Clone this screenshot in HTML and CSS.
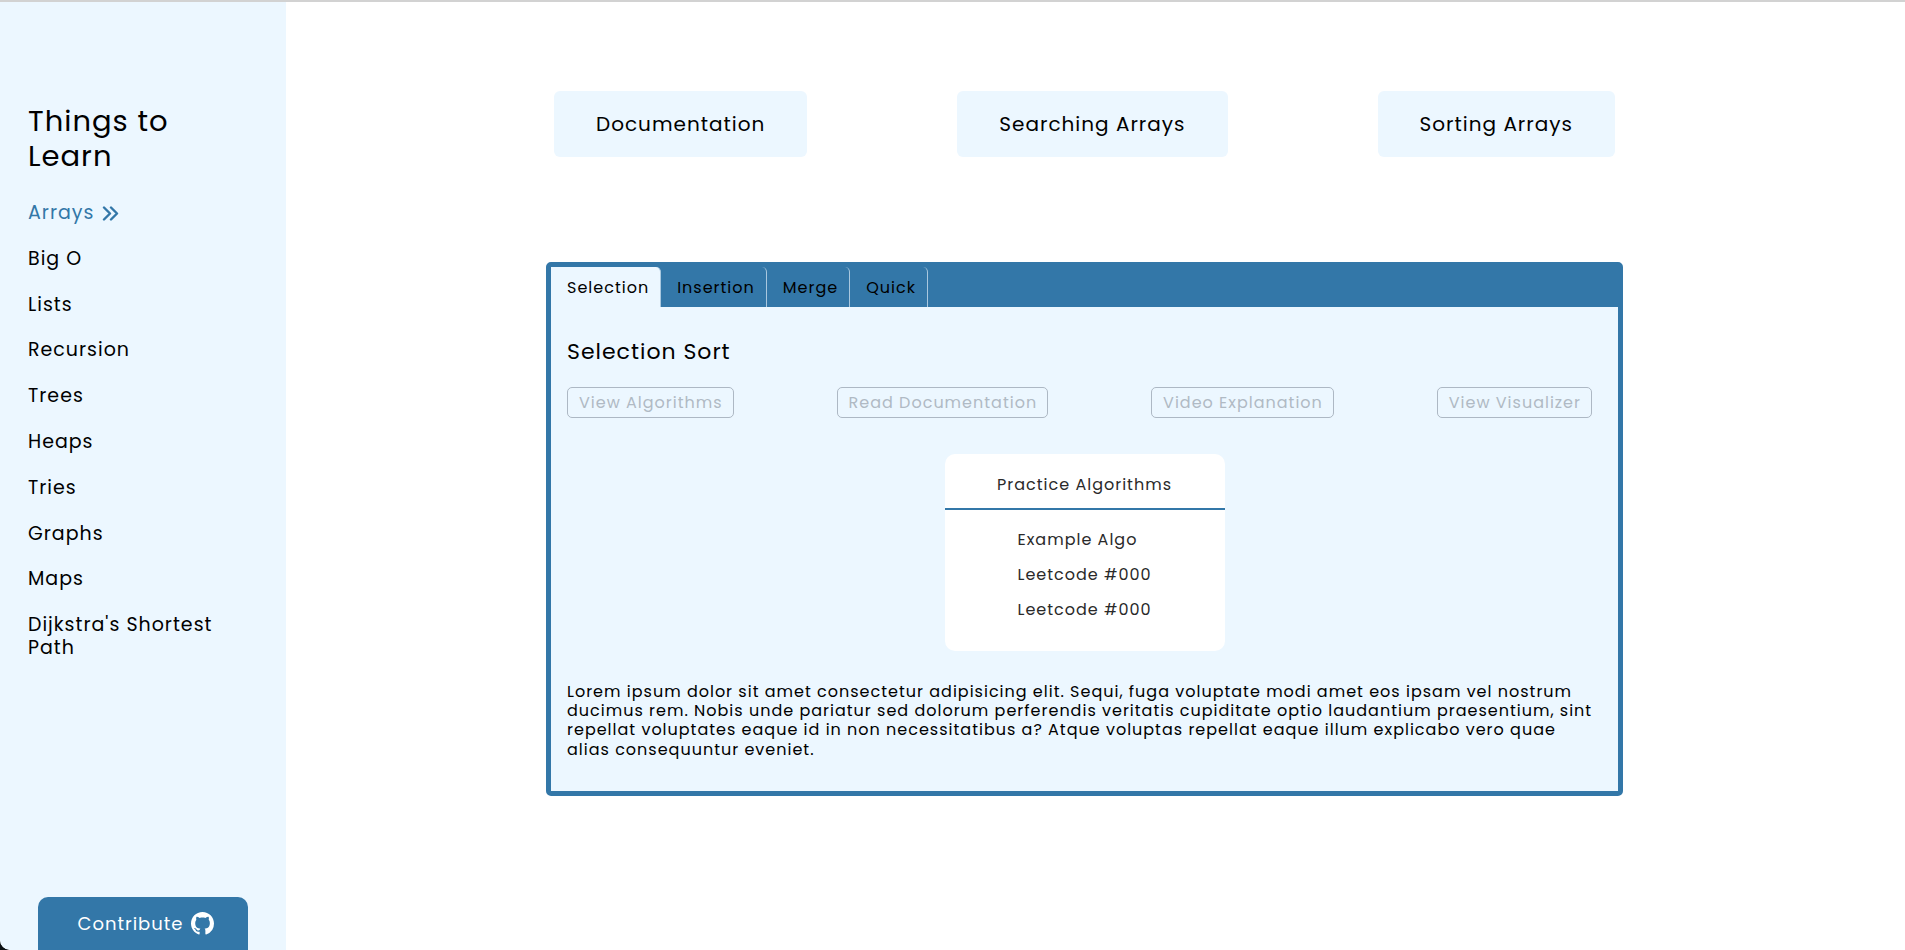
FILE: index.html
```html
<!DOCTYPE html>
<html lang="en">
<head>
<meta charset="utf-8">
<title>Things to Learn</title>
<link rel="stylesheet" href="styles.css">
</head>
<body>
<div class="layout">
  <aside class="sidebar">
    <h1 class="sidebar-title">Things to Learn</h1>
    <nav>
      <ul class="topics">
        <li><a class="topic active" href="#arrays">Arrays
          <svg class="chevrons" viewBox="0 0 17 15" aria-hidden="true"><path d="M2 1.500l6 6-6 6M9 1.500l6 6-6 6"/></svg></a></li>
        <li><a class="topic" href="#big-o">Big O</a></li>
        <li><a class="topic" href="#lists">Lists</a></li>
        <li><a class="topic" href="#recursion">Recursion</a></li>
        <li><a class="topic" href="#trees">Trees</a></li>
        <li><a class="topic" href="#heaps">Heaps</a></li>
        <li><a class="topic" href="#tries">Tries</a></li>
        <li><a class="topic" href="#graphs">Graphs</a></li>
        <li><a class="topic" href="#maps">Maps</a></li>
        <li><a class="topic" href="#dijkstra">Dijkstra's Shortest Path</a></li>
      </ul>
    </nav>
    <a class="contribute" href="#contribute">Contribute
      <svg class="github" viewBox="0 0 16 16" aria-hidden="true"><path d="M8 0C3.580 0 0 3.580 0 8c0 3.540 2.290 6.530 5.470 7.590.4.07.55-.17.55-.38 0-.19-.01-.82-.01-1.490-2.010.37-2.530-.49-2.690-.94-.09-.23-.48-.94-.82-1.130-.28-.15-.68-.52-.01-.53.63-.01 1.080.58 1.230.82.72 1.210 1.870.87 2.330.66.07-.52.28-.87.51-1.070-1.780-.2-3.640-.89-3.640-3.950 0-.87.31-1.590.82-2.150-.08-.2-.36-1.020.08-2.120 0 0 .67-.21 2.200.82.64-.18 1.320-.27 2-.27s1.360.09 2 .27c1.530-1.040 2.200-.82 2.200-.82.44 1.100.16 1.920.08 2.120.51.56.82 1.270.82 2.150 0 3.070-1.870 3.750-3.650 3.950.29.25.54.73.54 1.480 0 1.070-.01 1.930-.01 2.200 0 .21.15.46.55.38A8.010 8.010 0 0 0 16 8c0-4.420-3.580-8-8-8z"/></svg></a>
  </aside>
  <main class="content">
    <nav class="sections">
      <a class="section-link" href="#documentation">Documentation</a>
      <a class="section-link" href="#searching">Searching Arrays</a>
      <a class="section-link" href="#sorting">Sorting Arrays</a>
    </nav>
    <section class="panel">
      <div class="tabs" role="tablist">
        <button class="tab selected" role="tab" aria-selected="true">Selection</button>
        <button class="tab" role="tab" aria-selected="false">Insertion</button>
        <button class="tab" role="tab" aria-selected="false">Merge</button>
        <button class="tab" role="tab" aria-selected="false">Quick</button>
      </div>
      <div class="panel-body" role="tabpanel">
        <h2 class="panel-title">Selection Sort</h2>
        <div class="actions">
          <button class="action" disabled>View Algorithms</button>
          <button class="action" disabled>Read Documentation</button>
          <button class="action" disabled>Video Explanation</button>
          <button class="action" disabled>View Visualizer</button>
        </div>
        <div class="practice">
          <h3 class="practice-title">Practice Algorithms</h3>
          <ul class="practice-list">
            <li>Example Algo</li>
            <li>Leetcode #000</li>
            <li>Leetcode #000</li>
          </ul>
        </div>
        <p class="description">Lorem ipsum dolor sit amet consectetur adipisicing elit. Sequi, fuga voluptate modi amet eos ipsam vel nostrum ducimus rem. Nobis unde pariatur sed dolorum perferendis veritatis cupiditate optio laudantium praesentium, sint repellat voluptates eaque id in non necessitatibus a? Atque voluptas repellat eaque illum explicabo vero quae alias consequuntur eveniet.</p>
      </div>
    </section>
  </main>
</div>
</body>
</html>
```

FILE: styles.css
```css
:root {
  --blue: #3377a8;
  --pale: #ecf7ff;
}

* {
  box-sizing: border-box;
  margin: 0;
  padding: 0;
}

html {
  background: #0b1013;
}

body {
  background: #fff;
  border-bottom-left-radius: 10px;
  color: #000;
  font-family: Poppins, Inter, sans-serif;
  font-size: 16px;
  letter-spacing: 1px;
  line-height: 1.2;
  overflow: hidden;
}

button {
  font: inherit;
  letter-spacing: inherit;
  color: inherit;
  background: none;
  border: 0;
}

a {
  color: inherit;
  text-decoration: none;
}

ul {
  list-style: none;
}

h1, h2, h3 {
  font-weight: 400;
}

.layout {
  display: flex;
  min-height: 100vh;
  border-top: 2px solid #d2d2d2;
}

.sidebar {
  flex: 0 0 286px;
  display: flex;
  flex-direction: column;
  padding: 102px 38px 0 28px;
  background: var(--pale);
  border-bottom-left-radius: 10px;
}

.sidebar-title {
  max-width: 180px;
  margin-bottom: 28px;
  font-size: 29px;
  line-height: 35px;
}

.topics {
  display: grid;
  gap: 23px;
  font-size: 19px;
}

.topic {
  display: flex;
  align-items: center;
  gap: 8px;
}

.active {
  color: var(--blue);
}

.chevrons {
  width: 17px;
  height: 15px;
  fill: none;
  stroke: currentColor;
  stroke-width: 2.4;
  stroke-linecap: round;
  stroke-linejoin: round;
}

.contribute {
  display: flex;
  align-items: center;
  justify-content: center;
  gap: 7px;
  height: 53px;
  margin: auto 0 0 10px;
  padding-left: 5px;
  border-radius: 10px 10px 0 0;
  background: var(--blue);
  color: #fff;
  font-size: 18px;
}

.github {
  width: 23px;
  height: 23px;
  fill: currentColor;
}

.content {
  flex: 1;
  padding: 89px 282px 0 260px;
}

.sections {
  display: flex;
  justify-content: space-between;
  margin: 0 8px 105px;
}

.section-link {
  padding: 21px 42px;
  border-radius: 6px;
  background: var(--pale);
  font-size: 20px;
  line-height: 24px;
}

.panel {
  border: 5px solid var(--blue);
  border-radius: 5px;
  background: var(--pale);
}

.tabs {
  display: flex;
  height: 40px;
  background: var(--blue);
}

.tab {
  padding: 2px 11px 0 16px;
  border-right: 1px solid #a9c8df;
  border-top-right-radius: 5px;
}

.selected {
  background: var(--pale);
}

.panel-body {
  padding: 30px 16px 32px;
}

.panel-title {
  margin-bottom: 20px;
  font-size: 22px;
  line-height: 30px;
}

.actions {
  display: flex;
  justify-content: space-between;
  margin: 0 10px 36px 0;
}

.action {
  height: 31px;
  padding: 0 10px 0 11px;
  border: 1px solid #adb8c4;
  border-radius: 5px;
  color: #b0bac4;
}

.practice {
  width: 280px;
  margin: 0 auto 31px;
  border-radius: 10px;
  background: #fff;
  color: #2a2a2a;
  line-height: 19px;
}

.practice-title {
  padding: 21px 0 14px;
  border-bottom: 2px solid var(--blue);
  font-size: 16px;
  text-align: center;
}

.practice-list {
  display: grid;
  gap: 16px;
  padding: 20px 0 32px 73px;
}

.description {
  margin-right: 8px;
}
```
